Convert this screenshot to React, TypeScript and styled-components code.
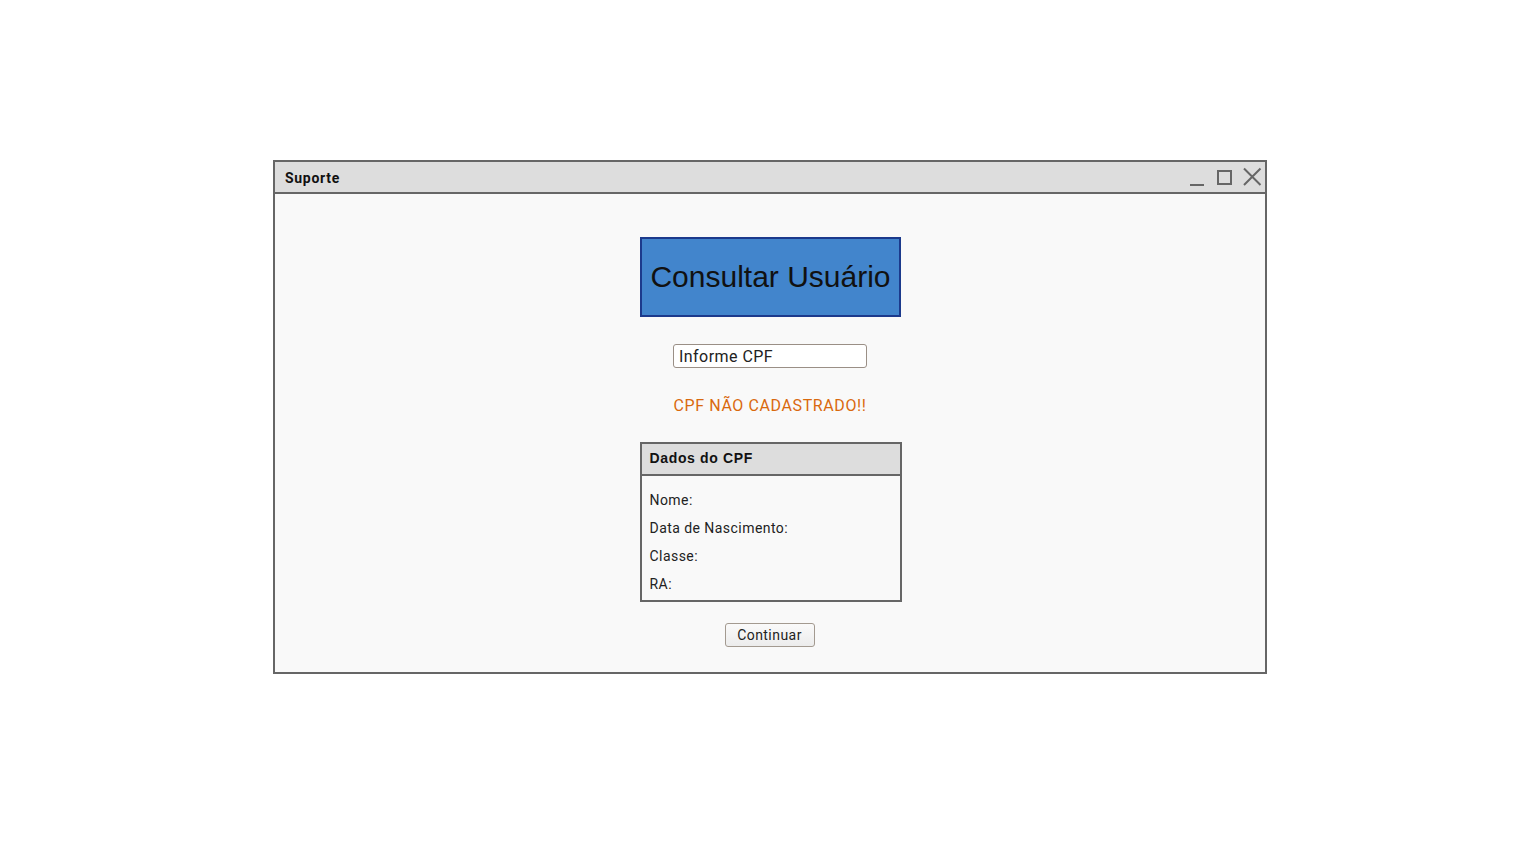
import React from "react";
import styled, { createGlobalStyle } from "styled-components";

const Global = createGlobalStyle`
  html, body { margin: 0; padding: 0; background: #ffffff; }
  body { font-family: Roboto, "Liberation Sans", Arial, sans-serif; }
`;

const Page = styled.div`
  padding: 160px 0 0 273px;
`;

const Window = styled.div`
  box-sizing: border-box;
  width: 994px;
  height: 514px;
  border: 2px solid #666666;
  background: #f9f9f9;
  display: flex;
  flex-direction: column;
`;

const TitleBar = styled.div`
  box-sizing: border-box;
  height: 32px;
  background: #dddddd;
  border-bottom: 2px solid #666666;
  display: flex;
  align-items: center;
  padding: 1px 0 0 10px;
`;

const Title = styled.span`
  font-family: Roboto, sans-serif;
  font-weight: 700;
  font-size: 14px;
  letter-spacing: 0.7px;
  color: #111;
  flex: 1;
`;

const Controls = styled.div`
  display: flex;
  align-items: center;
  margin-top: -1px;
`;

const CtrlSvg = styled.svg`
  display: block;
`;

const Body = styled.div`
  flex: 1;
  display: flex;
  flex-direction: column;
  align-items: center;
  padding-top: 43px;
`;

const HeaderBox = styled.div`
  box-sizing: border-box;
  width: 261px;
  height: 80px;
  margin-left: 1px;
  background: #4285cc;
  border: 2px solid #1c3a8c;
  display: flex;
  align-items: center;
  justify-content: center;
  font-family: "Liberation Sans", Arial, sans-serif;
  font-size: 30px;
  color: #111;
`;

const Input = styled.input`
  box-sizing: border-box;
  width: 194px;
  height: 24px;
  margin-top: 27px;
  border: 1px solid #9a8f86;
  border-radius: 3px;
  background: #ffffff;
  padding: 0 5px;
  font-family: Roboto, sans-serif;
  font-size: 16px;
  letter-spacing: 0.45px;
  color: #222;
  outline: none;
  &::placeholder { color: #222; }
`;

const ErrorText = styled.div`
  margin-top: 28px;
  font-family: Roboto, sans-serif;
  font-size: 16px;
  line-height: 19px;
  letter-spacing: 0.6px;
  color: #d9690e;
`;

const Panel = styled.div`
  box-sizing: border-box;
  width: 262px;
  height: 160px;
  margin-top: 27px;
  margin-left: 1px;
  border: 2px solid #666666;
  background: #f9f9f9;
  display: flex;
  flex-direction: column;
`;

const PanelHead = styled.div`
  box-sizing: border-box;
  height: 32px;
  background: #dddddd;
  border-bottom: 2px solid #666666;
  display: flex;
  align-items: center;
  padding: 0 0 2px 8px;
  font-family: "Liberation Sans", Arial, sans-serif;
  font-weight: 700;
  font-size: 14px;
  letter-spacing: 0.65px;
  color: #111;
`;

const Rows = styled.div`
  display: flex;
  flex-direction: column;
  padding: 16px 8px 0;
  gap: 11px;
`;

const Row = styled.div`
  font-family: Roboto, sans-serif;
  font-size: 14px;
  line-height: 17px;
  letter-spacing: 0.45px;
  color: #222;
`;

const Button = styled.button`
  box-sizing: border-box;
  width: 90px;
  height: 24px;
  margin-top: 21px;
  margin-left: -1px;
  border: 1px solid #a39a90;
  border-radius: 3px;
  background: linear-gradient(#fafafa, #ececec);
  font-family: Roboto, sans-serif;
  font-size: 14px;
  letter-spacing: 0.45px;
  color: #222;
  padding: 0;
`;

export default function App() {
  return (
    <>
      <Global />
      <Page>
        <Window>
          <TitleBar>
            <Title>Suporte</Title>
            <Controls>
              <CtrlSvg width="28" height="30" viewBox="0 0 28 30">
                <line x1="7" y1="23" x2="21" y2="23" stroke="#666" strokeWidth="2" />
              </CtrlSvg>
              <CtrlSvg width="28" height="30" viewBox="0 0 28 30">
                <rect x="7" y="9" width="13" height="13" fill="none" stroke="#666" strokeWidth="2" />
              </CtrlSvg>
              <CtrlSvg width="26" height="30" viewBox="0 0 26 30">
                <path d="M5 6.5 L21.5 23 M21.5 6.5 L5 23" stroke="#666" strokeWidth="2" fill="none" />
              </CtrlSvg>
            </Controls>
          </TitleBar>
          <Body>
            <HeaderBox>Consultar Usuário</HeaderBox>
            <Input placeholder="Informe CPF" />
            <ErrorText>CPF NÃO CADASTRADO!!</ErrorText>
            <Panel>
              <PanelHead>Dados do CPF</PanelHead>
              <Rows>
                <Row>Nome:</Row>
                <Row>Data de Nascimento:</Row>
                <Row>Classe:</Row>
                <Row>RA:</Row>
              </Rows>
            </Panel>
            <Button>Continuar</Button>
          </Body>
        </Window>
      </Page>
    </>
  );
}
